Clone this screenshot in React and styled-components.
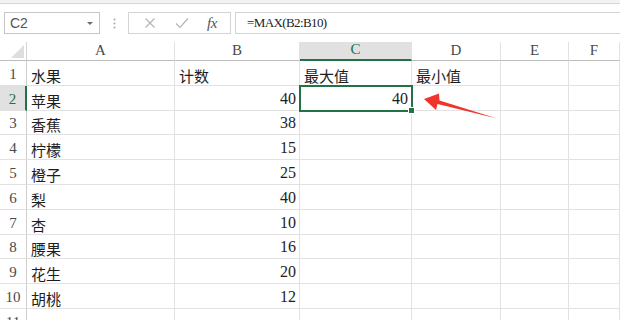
import React from "react";
import styled, { createGlobalStyle } from "styled-components";

const GlobalStyle = createGlobalStyle`
  html, body {
    margin: 0;
    padding: 0;
    background: #ffffff;
  }
`;

const GREEN = "#217346";

const Root = styled.div`
  position: relative;
  width: 620px;
  height: 320px;
  overflow: hidden;
  background: #ffffff;
  font-family: "Liberation Serif", "Noto Sans CJK SC", serif;
`;

const RibbonEdge = styled.div`
  height: 3px;
  background: #f3f3f3;
  border-bottom: 1px solid #d6d6d6;
`;

const FormulaBar = styled.div`
  display: flex;
  align-items: center;
  padding: 8px 0 8px 4px;
`;

const NameBox = styled.div`
  box-sizing: border-box;
  width: 96px;
  height: 22px;
  border: 1px solid #c6c6c6;
  display: flex;
  align-items: center;
  justify-content: space-between;
  padding: 0 6px 0 5px;
  font-family: "Liberation Sans", Arial, sans-serif;
  font-size: 14px;
  color: #555;
`;

const Caret = styled.span`
  width: 0;
  height: 0;
  border-left: 3px solid transparent;
  border-right: 3px solid transparent;
  border-top: 3px solid #6a6a6a;
`;

const Grip = styled.div`
  width: 28px;
  display: flex;
  justify-content: center;
`;

const ButtonGroup = styled.div`
  box-sizing: border-box;
  width: 103px;
  height: 22px;
  border: 1px solid #d4d4d4;
  display: flex;
  align-items: center;
  justify-content: space-around;
  padding: 0 4px 0 6px;
`;

const FxLabel = styled.span`
  font-family: "Liberation Serif", serif;
  font-style: italic;
  font-size: 15px;
  color: #555;
  letter-spacing: -0.5px;
`;

const FormulaInput = styled.div`
  box-sizing: border-box;
  flex: 1;
  margin-left: 4px;
  margin-right: -6px;
  height: 22px;
  border: 1px solid #d4d4d4;
  display: flex;
  align-items: center;
  padding-left: 11px;
  font-family: "Liberation Serif", serif;
  font-size: 13px;
  letter-spacing: -0.6px;
  color: #222;
`;

const Sheet = styled.div`
  display: grid;
  grid-template-columns: 27px 148px 125px 112px 89px 68px 1fr;
  grid-template-rows: 19px repeat(11, 24.8px);
`;

const Corner = styled.div`
  box-sizing: border-box;
  border-right: 1px solid #d4d4d4;
  border-bottom: 1px solid #bdbdbd;
  display: flex;
  align-items: flex-end;
  justify-content: flex-end;
  padding: 0 2px 2px 0;
`;

const CornerMark = styled.span`
  width: 0;
  height: 0;
  border-left: 13px solid transparent;
  border-bottom: 13px solid #dedede;
`;

const ColHead = styled.div`
  box-sizing: border-box;
  display: flex;
  align-items: flex-end;
  justify-content: center;
  padding-bottom: 1px;
  font-size: 15px;
  color: ${(p) => (p.$active ? GREEN : "#4a4a4a")};
  background: ${(p) => (p.$active ? "#e1e1e1" : "#ffffff")};
  border-right: 1px solid #e2e2e2;
  border-bottom: ${(p) => (p.$active ? `2px solid ${GREEN}` : "1px solid #bdbdbd")};
`;

const RowHead = styled.div`
  box-sizing: border-box;
  display: flex;
  align-items: flex-end;
  justify-content: center;
  padding-bottom: 2px;
  font-size: 15px;
  color: ${(p) => (p.$active ? GREEN : "#4a4a4a")};
  background: ${(p) => (p.$active ? "#e1e1e1" : "#ffffff")};
  border-right: ${(p) => (p.$active ? `2px solid ${GREEN}` : "1px solid #cfcfcf")};
  border-bottom: 1px solid #e2e2e2;
`;

const Cell = styled.div`
  box-sizing: border-box;
  position: relative;
  display: flex;
  align-items: flex-end;
  justify-content: ${(p) => (p.$num ? "flex-end" : "flex-start")};
  padding: ${(p) => (p.$num ? "0 3px 3px 0" : "0 0 2px 4px")};
  font-family: ${(p) =>
    p.$num
      ? '"Liberation Serif", serif'
      : '"Noto Sans CJK SC", "Liberation Serif", sans-serif'};
  font-size: ${(p) => (p.$num ? "16px" : "15px")};
  line-height: 1;
  color: #1e1e1e;
  white-space: nowrap;
  border-right: 1px solid #e2e2e2;
  border-bottom: 1px solid #e2e2e2;

  ${(p) =>
    p.$selected &&
    `
    z-index: 2;
    &::after {
      content: "";
      position: absolute;
      top: -1px;
      left: -1px;
      right: -2px;
      bottom: -2px;
      border: 2px solid ${GREEN};
    }
    &::before {
      content: "";
      position: absolute;
      right: -4px;
      bottom: -4px;
      width: 5px;
      height: 5px;
      background: ${GREEN};
      border: 1px solid #ffffff;
      z-index: 3;
    }
  `}
`;

const Arrow = styled.svg`
  position: absolute;
  left: 420px;
  top: 88px;
  width: 82px;
  height: 34px;
`;

const columns = ["A", "B", "C", "D", "E", "F"];

const rows = [
  ["水果", "计数", "最大值", "最小值"],
  ["苹果", 40, 40],
  ["香蕉", 38],
  ["柠檬", 15],
  ["橙子", 25],
  ["梨", 40],
  ["杏", 10],
  ["腰果", 16],
  ["花生", 20],
  ["胡桃", 12],
  [],
];

const CrossIcon = () => (
  <svg width="12" height="12" viewBox="0 0 12 12">
    <path d="M1.5 1.5 L10.5 10.5 M10.5 1.5 L1.5 10.5" stroke="#b4b4b4" strokeWidth="1.2" fill="none" />
  </svg>
);

const CheckIcon = () => (
  <svg width="14" height="12" viewBox="0 0 14 12">
    <path d="M1 6.5 L5 10.5 L13 1.5" stroke="#b4b4b4" strokeWidth="1.2" fill="none" />
  </svg>
);

const GripIcon = () => (
  <svg width="3" height="11" viewBox="0 0 3 11">
    <circle cx="1.5" cy="1.5" r="1" fill="#a8a8a8" />
    <circle cx="1.5" cy="5.5" r="1" fill="#a8a8a8" />
    <circle cx="1.5" cy="9.5" r="1" fill="#a8a8a8" />
  </svg>
);

export default function App() {
  return (
    <Root>
      <GlobalStyle />
      <RibbonEdge />
      <FormulaBar>
        <NameBox>
          C2
          <Caret />
        </NameBox>
        <Grip>
          <GripIcon />
        </Grip>
        <ButtonGroup>
          <CrossIcon />
          <CheckIcon />
          <FxLabel>fx</FxLabel>
        </ButtonGroup>
        <FormulaInput>=MAX(B2:B10)</FormulaInput>
      </FormulaBar>
      <Sheet>
        <Corner>
          <CornerMark />
        </Corner>
        {columns.map((c) => (
          <ColHead key={c} $active={c === "C"}>
            {c}
          </ColHead>
        ))}
        {rows.map((row, r) => (
          <React.Fragment key={r}>
            <RowHead $active={r === 1}>{r + 1}</RowHead>
            {columns.map((c, i) => {
              const v = row[i];
              return (
                <Cell
                  key={c}
                  $num={typeof v === "number"}
                  $selected={r === 1 && c === "C"}
                >
                  {v}
                </Cell>
              );
            })}
          </React.Fragment>
        ))}
      </Sheet>
      <Arrow viewBox="420 88 82 34">
        <polygon
          points="424,99 439,93.5 439.5,100.5 497,118.5 437.5,104 436,110"
          fill="#f0362c"
        />
      </Arrow>
    </Root>
  );
}
